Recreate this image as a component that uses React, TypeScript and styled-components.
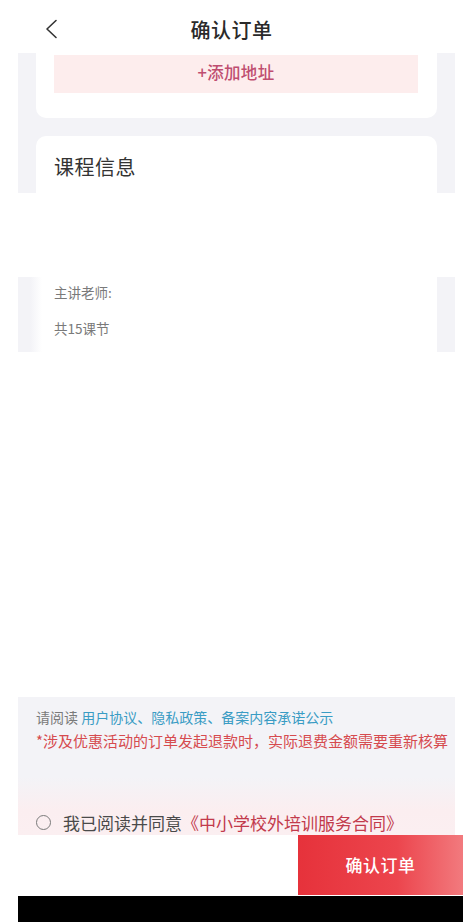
import React from "react";
import styled, { createGlobalStyle } from "styled-components";

const Global = createGlobalStyle`
  html, body { margin: 0; padding: 0; background: #ffffff; }
  body { font-family: "Noto Sans CJK SC", "Noto Sans", sans-serif; }
  * { box-sizing: border-box; }
`;

const GRAY = "#f3f3f7";

const Page = styled.div`
  width: 463px;
  height: 922px;
  display: flex;
  flex-direction: column;
  background: #ffffff;
  overflow: hidden;
`;

const Header = styled.header`
  height: 53px;
  flex: none;
  display: flex;
  align-items: center;
  justify-content: center;
  position: relative;
  background: #ffffff;
`;

const BackButton = styled.button`
  position: absolute;
  left: 40px;
  top: 16px;
  width: 22px;
  height: 26px;
  padding: 0;
  border: 0;
  background: transparent;
  display: flex;
  align-items: center;
  justify-content: center;
`;

const Title = styled.h1`
  margin: 0;
  padding-top: 5px;
  font-size: 20px;
  font-weight: 500;
  color: #2a2a2a;
  letter-spacing: 0.5px;
`;

const GrayBand = styled.section<{ $pt?: number; $pb?: number }>`
  flex: none;
  margin: 0 8px 0 18px;
  background: ${GRAY};
  padding: ${(p) => p.$pt ?? 0}px 18px ${(p) => p.$pb ?? 0}px;
`;

const AddressCard = styled.div`
  background: #fff;
  border-radius: 0 0 10px 10px;
  padding: 2px 19px 25px 18px;
`;

const AddAddress = styled.div`
  height: 38px;
  background: #fdeded;
  color: #bf4d70;
  font-size: 16.5px;
  font-weight: 500;
  display: flex;
  align-items: center;
  justify-content: center;
  padding-bottom: 4px;
  letter-spacing: 0.3px;
`;

const CourseCard = styled.div`
  background: #fff;
  border-radius: 10px 10px 0 0;
  height: 57px;
  padding: 17px 18px 0;
`;

const SectionTitle = styled.h2`
  margin: 0;
  font-size: 20px;
  line-height: 28px;
  font-weight: 400;
  color: #333;
  letter-spacing: 0.5px;
`;

const WhiteGap = styled.div<{ $h: number }>`
  flex: none;
  height: ${(p) => p.$h}px;
`;

const TeacherBand = styled.section`
  flex: none;
  height: 75px;
  margin: 0 8px 0 18px;
  background: linear-gradient(
    to right,
    ${GRAY} 0px,
    ${GRAY} 12px,
    #ffffff 24px,
    #ffffff 419px,
    ${GRAY} 419px
  );
  padding: 5px 18px 0 36px;
  display: flex;
  flex-direction: column;
  gap: 16px;
`;

const InfoLine = styled.div`
  font-size: 13.5px;
  line-height: 20px;
  color: #7a7a7a;
`;

const Spacer = styled.div`
  flex: 1;
`;

const NoticeBand = styled.section`
  flex: none;
  height: 138px;
  margin: 0 8px 0 18px;
  background: linear-gradient(
    to bottom,
    ${GRAY} 0%,
    ${GRAY} 58%,
    #fbeef0 82%,
    #fbeff1 100%
  );
  padding: 8px 0 0 18px;
  display: flex;
  flex-direction: column;
`;

const NoticeLine = styled.p<{ $size: number; $color: string }>`
  margin: 0;
  font-size: ${(p) => p.$size}px;
  line-height: 24px;
  color: ${(p) => p.$color};
  white-space: nowrap;
`;

const Link = styled.span`
  color: #3a9cc4;
`;

const AgreeRow = styled.label`
  margin-top: auto;
  height: 26px;
  display: flex;
  align-items: center;
  gap: 12px;
  font-size: 17px;
  color: #4a4a4a;
  white-space: nowrap;
`;

const Radio = styled.span`
  width: 15px;
  height: 15px;
  border-radius: 50%;
  border: 1.5px solid #7a7a7a;
  flex: none;
`;

const Contract = styled.span`
  color: #c23a4c;
`;

const Footer = styled.footer`
  flex: none;
  height: 61px;
  display: flex;
  justify-content: flex-end;
  background: #ffffff;
`;

const SubmitButton = styled.button`
  width: 165px;
  height: 60px;
  border: 0;
  padding: 0 0 2px;
  background: linear-gradient(to right, #e6323b 0%, #ec454d 60%, #f27a7e 100%);
  color: #fff;
  font-family: inherit;
  font-size: 17px;
  font-weight: 500;
  letter-spacing: 0.5px;
`;

const HomeBar = styled.div`
  flex: none;
  height: 26px;
  margin-left: 18px;
  background: #000;
`;

export default function App() {
  return (
    <Page>
      <Global />
      <Header>
        <BackButton aria-label="返回">
          <svg width="14" height="20" viewBox="0 0 14 20" fill="none">
            <path d="M12 1.5 L3 10 L12 18.5" stroke="#333" strokeWidth="1.6" strokeLinecap="round" strokeLinejoin="round" />
          </svg>
        </BackButton>
        <Title>确认订单</Title>
      </Header>

      <GrayBand $pb={18}>
        <AddressCard>
          <AddAddress>+添加地址</AddAddress>
        </AddressCard>
      </GrayBand>

      <GrayBand>
        <CourseCard>
          <SectionTitle>课程信息</SectionTitle>
        </CourseCard>
      </GrayBand>

      <WhiteGap $h={84} />

      <TeacherBand>
        <InfoLine>主讲老师:</InfoLine>
        <InfoLine>共15课节</InfoLine>
      </TeacherBand>

      <Spacer />

      <NoticeBand>
        <NoticeLine $size={14} $color="#7a7a7a">
          请阅读 <Link>用户协议、隐私政策、备案内容承诺公示</Link>
        </NoticeLine>
        <NoticeLine $size={15} $color="#d64b4f">
          *涉及优惠活动的订单发起退款时，实际退费金额需要重新核算
        </NoticeLine>
        <AgreeRow>
          <Radio />
          <span>
            我已阅读并同意<Contract>《中小学校外培训服务合同》</Contract>
          </span>
        </AgreeRow>
      </NoticeBand>

      <Footer>
        <SubmitButton>确认订单</SubmitButton>
      </Footer>
      <HomeBar />
    </Page>
  );
}
